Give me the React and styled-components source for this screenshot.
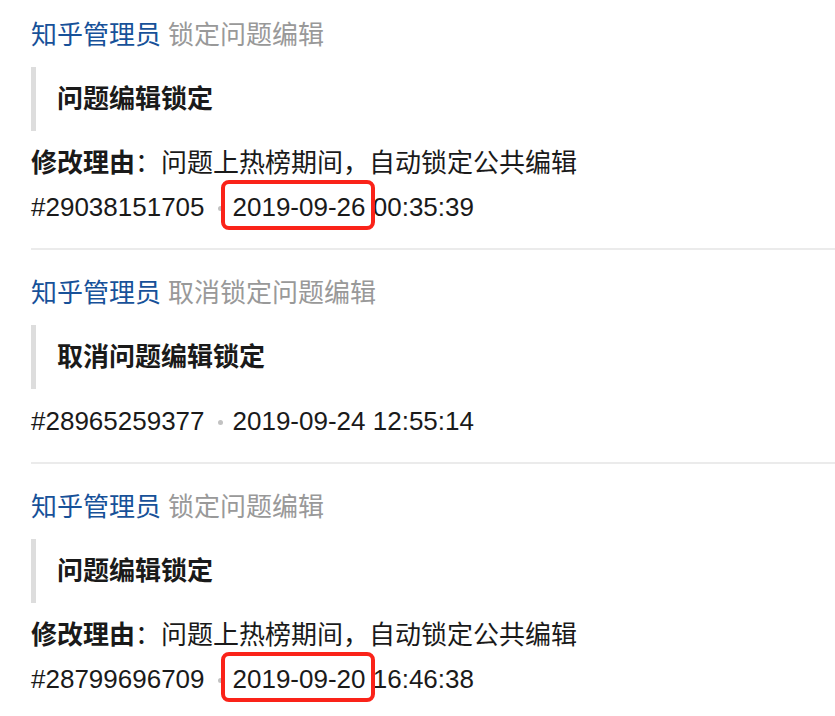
import styled, { createGlobalStyle } from "styled-components";

const GlobalStyle = createGlobalStyle`
  html, body {
    margin: 0;
    padding: 0;
    background: #fff;
  }
  body {
    font-family: "Liberation Sans", Arial, "Noto Sans CJK SC", sans-serif;
    color: #1a1a1a;
  }
`;

const logs = [
  {
    id: "#29038151705",
    action: "锁定问题编辑",
    title: "问题编辑锁定",
    reason: "问题上热榜期间，自动锁定公共编辑",
    date: "2019-09-26",
    time: "00:35:39",
    marked: true,
  },
  {
    id: "#28965259377",
    action: "取消锁定问题编辑",
    title: "取消问题编辑锁定",
    date: "2019-09-24",
    time: "12:55:14",
  },
  {
    id: "#28799696709",
    action: "锁定问题编辑",
    title: "问题编辑锁定",
    reason: "问题上热榜期间，自动锁定公共编辑",
    date: "2019-09-20",
    time: "16:46:38",
    marked: true,
  },
];

export default function App() {
  return (
    <Page>
      <GlobalStyle />
      <List>
        {logs.map((log) => (
          <Item key={log.id}>
            <Header>
              <Author>知乎管理员</Author>
              <Action>{log.action}</Action>
            </Header>
            <Quote>{log.title}</Quote>
            {log.reason && (
              <Line>
                <Label>修改理由</Label>：{log.reason}
              </Line>
            )}
            <Line>
              {log.id}
              <Dot />
              {log.marked ? <Marked>{log.date}</Marked> : log.date}{" "}
              {log.time}
            </Line>
          </Item>
        ))}
      </List>
    </Page>
  );
}

const Page = styled.div`
  width: 835px;
  height: 716px;
  overflow: hidden;
  padding-left: 31px;
  box-sizing: border-box;
`;

const List = styled.div`
  display: flex;
  flex-direction: column;
`;

const Item = styled.div`
  padding: 21px 0 19px;
  border-bottom: 2px solid #ebebeb;
  font-size: 26px;
  line-height: 44px;

  &:first-child {
    padding-top: 13px;
  }
`;

const Header = styled.div`
  white-space: nowrap;
`;

const Author = styled.span`
  color: #175199;
`;

const Action = styled.span`
  color: #999;
  margin-left: 7px;
`;

const Quote = styled.div`
  margin-top: 10px;
  padding: 10px 0 10px 21px;
  border-left: 5px solid #dddddd;
  font-weight: 700;
  color: #1a1a1a;
`;

const Line = styled.div`
  white-space: nowrap;
  color: #1a1a1a;

  ${Quote} + & {
    margin-top: 10px;
  }
`;

const Label = styled.span`
  font-weight: 700;
`;

const Dot = styled.span`
  display: inline-block;
  width: 5px;
  height: 5px;
  border-radius: 50%;
  background: #c2c2c2;
  margin: 0 10px 0 13px;
  vertical-align: middle;
  position: relative;
  top: -1px;
`;

const Marked = styled.span`
  display: inline-block;
  position: relative;

  &::after {
    content: "";
    position: absolute;
    left: -12px;
    right: -9px;
    top: -5px;
    bottom: -1px;
    border: 4px solid #fa2319;
    border-radius: 8px;
  }
`;
